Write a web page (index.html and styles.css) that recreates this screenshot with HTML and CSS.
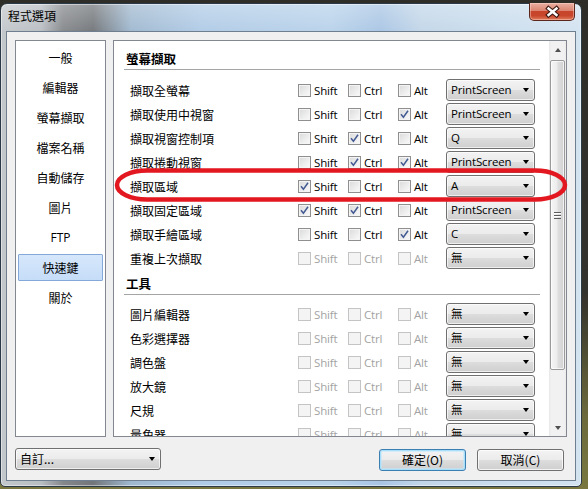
FILE: index.html
```html
<!DOCTYPE html>
<html lang="zh-Hant">
<head>
<meta charset="utf-8">
<title>程式選項</title>
<link rel="stylesheet" href="styles.css">
</head>
<body>
<div class="window">
  <div class="titlebar">
    <span class="title">程式選項</span>
    <span class="close">
      <svg width="46" height="18" viewBox="0 0 46 18">
        <path d="M19.5 6.5 L27.5 13 M27.5 6.5 L19.5 13" stroke="#3b1710" stroke-width="4.6" stroke-linecap="square" fill="none"/>
        <path d="M19.5 6.5 L27.5 13 M27.5 6.5 L19.5 13" stroke="#ffffff" stroke-width="2.4" stroke-linecap="square" fill="none"/>
      </svg>
    </span>
  </div>
  <div class="client">
    <div class="main">
      <ul class="nav">
        <li>一般</li>
        <li>編輯器</li>
        <li>螢幕擷取</li>
        <li>檔案名稱</li>
        <li>自動儲存</li>
        <li>圖片</li>
        <li class="latin">FTP</li>
        <li class="selected">快速鍵</li>
        <li>關於</li>
      </ul>
      <div class="panel">
        <div class="scroll-area">
          <div class="section-title first">螢幕擷取</div>
          <div class="rows">
            <div class="row">
              <span class="label">擷取全螢幕</span>
              <span class="cb"><span class="box"></span>Shift</span>
              <span class="cb"><span class="box"></span>Ctrl</span>
              <span class="cb"><span class="box"></span>Alt</span>
              <span class="combo"><span class="val">PrintScreen</span><span class="arrow"></span></span>
            </div>
            <div class="row">
              <span class="label">擷取使用中視窗</span>
              <span class="cb"><span class="box"></span>Shift</span>
              <span class="cb"><span class="box"></span>Ctrl</span>
              <span class="cb"><span class="box"><svg class="check" viewBox="0 0 11 11"><path d="M2 5.2 L4.4 8.2 L9 1.8"/></svg></span>Alt</span>
              <span class="combo"><span class="val">PrintScreen</span><span class="arrow"></span></span>
            </div>
            <div class="row">
              <span class="label">擷取視窗控制項</span>
              <span class="cb"><span class="box"></span>Shift</span>
              <span class="cb"><span class="box"><svg class="check" viewBox="0 0 11 11"><path d="M2 5.2 L4.4 8.2 L9 1.8"/></svg></span>Ctrl</span>
              <span class="cb"><span class="box"></span>Alt</span>
              <span class="combo"><span class="val">Q</span><span class="arrow"></span></span>
            </div>
            <div class="row">
              <span class="label">擷取捲動視窗</span>
              <span class="cb"><span class="box"></span>Shift</span>
              <span class="cb"><span class="box"><svg class="check" viewBox="0 0 11 11"><path d="M2 5.2 L4.4 8.2 L9 1.8"/></svg></span>Ctrl</span>
              <span class="cb"><span class="box"><svg class="check" viewBox="0 0 11 11"><path d="M2 5.2 L4.4 8.2 L9 1.8"/></svg></span>Alt</span>
              <span class="combo"><span class="val">PrintScreen</span><span class="arrow"></span></span>
            </div>
            <div class="row">
              <span class="label">擷取區域</span>
              <span class="cb"><span class="box"><svg class="check" viewBox="0 0 11 11"><path d="M2 5.2 L4.4 8.2 L9 1.8"/></svg></span>Shift</span>
              <span class="cb"><span class="box"></span>Ctrl</span>
              <span class="cb"><span class="box"></span>Alt</span>
              <span class="combo"><span class="val">A</span><span class="arrow"></span></span>
            </div>
            <div class="row">
              <span class="label">擷取固定區域</span>
              <span class="cb"><span class="box"><svg class="check" viewBox="0 0 11 11"><path d="M2 5.2 L4.4 8.2 L9 1.8"/></svg></span>Shift</span>
              <span class="cb"><span class="box"><svg class="check" viewBox="0 0 11 11"><path d="M2 5.2 L4.4 8.2 L9 1.8"/></svg></span>Ctrl</span>
              <span class="cb"><span class="box"></span>Alt</span>
              <span class="combo"><span class="val">PrintScreen</span><span class="arrow"></span></span>
            </div>
            <div class="row">
              <span class="label">擷取手繪區域</span>
              <span class="cb"><span class="box"></span>Shift</span>
              <span class="cb"><span class="box"></span>Ctrl</span>
              <span class="cb"><span class="box"><svg class="check" viewBox="0 0 11 11"><path d="M2 5.2 L4.4 8.2 L9 1.8"/></svg></span>Alt</span>
              <span class="combo"><span class="val">C</span><span class="arrow"></span></span>
            </div>
            <div class="row">
              <span class="label">重複上次擷取</span>
              <span class="cb disabled"><span class="box"></span>Shift</span>
              <span class="cb disabled"><span class="box"></span>Ctrl</span>
              <span class="cb disabled"><span class="box"></span>Alt</span>
              <span class="combo"><span class="val">無</span><span class="arrow"></span></span>
            </div>
          </div>
          <div class="section-title">工具</div>
          <div class="rows tools">
            <div class="row">
              <span class="label">圖片編輯器</span>
              <span class="cb disabled"><span class="box"></span>Shift</span>
              <span class="cb disabled"><span class="box"></span>Ctrl</span>
              <span class="cb disabled"><span class="box"></span>Alt</span>
              <span class="combo"><span class="val">無</span><span class="arrow"></span></span>
            </div>
            <div class="row">
              <span class="label">色彩選擇器</span>
              <span class="cb disabled"><span class="box"></span>Shift</span>
              <span class="cb disabled"><span class="box"></span>Ctrl</span>
              <span class="cb disabled"><span class="box"></span>Alt</span>
              <span class="combo"><span class="val">無</span><span class="arrow"></span></span>
            </div>
            <div class="row">
              <span class="label">調色盤</span>
              <span class="cb disabled"><span class="box"></span>Shift</span>
              <span class="cb disabled"><span class="box"></span>Ctrl</span>
              <span class="cb disabled"><span class="box"></span>Alt</span>
              <span class="combo"><span class="val">無</span><span class="arrow"></span></span>
            </div>
            <div class="row">
              <span class="label">放大鏡</span>
              <span class="cb disabled"><span class="box"></span>Shift</span>
              <span class="cb disabled"><span class="box"></span>Ctrl</span>
              <span class="cb disabled"><span class="box"></span>Alt</span>
              <span class="combo"><span class="val">無</span><span class="arrow"></span></span>
            </div>
            <div class="row">
              <span class="label">尺規</span>
              <span class="cb disabled"><span class="box"></span>Shift</span>
              <span class="cb disabled"><span class="box"></span>Ctrl</span>
              <span class="cb disabled"><span class="box"></span>Alt</span>
              <span class="combo"><span class="val">無</span><span class="arrow"></span></span>
            </div>
            <div class="row">
              <span class="label">量角器</span>
              <span class="cb disabled"><span class="box"></span>Shift</span>
              <span class="cb disabled"><span class="box"></span>Ctrl</span>
              <span class="cb disabled"><span class="box"></span>Alt</span>
              <span class="combo"><span class="val">無</span><span class="arrow"></span></span>
            </div>
          </div>
        </div>
        <div class="scrollbar">
          <span class="sb-btn"><span class="tri-up"></span></span>
          <span class="thumb"><span class="grip"></span></span>
          <span class="sb-space"></span>
          <span class="sb-btn"><span class="tri-down"></span></span>
        </div>
        <svg class="annotation" width="460" height="50" viewBox="0 0 460 50">
          <rect x="3" y="9.5" width="448" height="29" rx="30" ry="14.5" fill="none" stroke="#e3171f" stroke-width="4.5"/>
        </svg>
      </div>
    </div>
    <div class="footer">
      <span class="combo preset"><span class="val">自訂...</span><span class="arrow"></span></span>
      <div class="buttons">
        <span class="btn default">確定(O)</span>
        <span class="btn">取消(C)</span>
      </div>
    </div>
  </div>
</div>
</body>
</html>
```
FILE: styles.css
```css
* { box-sizing: border-box; }
html, body { margin: 0; padding: 0; }
body {
  width: 588px;
  height: 489px;
  overflow: hidden;
  background: linear-gradient(180deg, #2f2d28 0%, #34322c 60%, #6c6a3c 85%, #7a7840 100%);
  font-family: "Open Sans", "Noto Sans CJK TC", sans-serif;
  font-size: 12px;
  color: #000;
}
.window {
  margin-top: 3px;
  width: 582px;
  height: 484px;
  border: 1px solid #2c3946;
  border-radius: 7px 7px 5px 5px;
  background:
    linear-gradient(180deg, rgba(255,255,255,0.28) 0px, rgba(255,255,255,0.05) 26px, rgba(255,255,255,0) 27px),
    linear-gradient(90deg, #c3c8cc 0px, #b9bec3 40px, #85888b 62px, #72767a 92px, #9fb8cf 130px, #b0cbe6 200px, #b8d2ea 330px, #a9c5e4 380px, #c2d6e8 420px, #cadded 500px, #d3e3f0 582px);
  box-shadow: inset 0 0 0 1px rgba(255,255,255,0.45);
  display: flex;
  flex-direction: column;
}
.titlebar {
  height: 27px;
  display: flex;
  justify-content: space-between;
  align-items: flex-start;
  padding-left: 7px;
}
.title {
  font-family: "Noto Sans CJK TC", sans-serif;
  font-size: 12px;
  line-height: 24px;
  color: #000;
}
.close {
  display: block;
  margin-top: -1px;
  margin-right: 6px;
  width: 46px;
  height: 18px;
  border: 1px solid #5b261b;
  border-top: none;
  border-radius: 0 0 5px 5px;
  background: linear-gradient(180deg, #eab0a2 0%, #db8572 45%, #c6452b 50%, #c8472c 75%, #df7d5c 100%);
  box-shadow: inset 0 0 0 1px rgba(255,220,210,0.45);
}
.close svg { display: block; margin: -1px 0 0 -1px; }

.client {
  margin: 0 5px;
  height: 450px;
  background: #f0f0f0;
  border: 1px solid #6f7f90;
  display: flex;
  flex-direction: column;
}
.main {
  display: flex;
  gap: 7px;
  padding: 8px 8px 0 8px;
}
.nav {
  width: 91px;
  height: 397px;
  margin: 0;
  padding: 3px 2px 0;
  list-style: none;
  background: #fff;
  border: 1px solid #828790;
  font-family: "Noto Sans CJK TC", sans-serif;
}
.nav li {
  height: 27px;
  line-height: 25px;
  margin-bottom: 3px;
  border: 1px solid transparent;
  border-radius: 1px;
  text-align: center;
}
.nav li.latin { font-family: "Open Sans", sans-serif; font-size: 12px; }
.nav li.selected {
  background: linear-gradient(180deg, #d6e7fb 0%, #c6ddf8 100%);
  border-color: #84a9d8;
}
.panel {
  position: relative;
  width: 454px;
  height: 397px;
  background: #fff;
  border: 1px solid #828790;
  display: flex;
}
.scroll-area {
  flex: 1;
  overflow: hidden;
}
.section-title {
  margin: 0 9px 0 10px;
  padding: 4px 2px 0;
  line-height: 20px;
  font-family: "Noto Sans CJK TC", sans-serif;
  font-weight: bold;
  font-size: 12.5px;
  border-bottom: 1px solid #a5a5a5;
}
.section-title.first { margin-top: 5px; padding-top: 3px; }
.rows { padding-top: 8px; }
.rows.tools { padding-top: 7px; }
.row {
  display: grid;
  grid-template-columns: 168px 50px 50px 48px 89px;
  height: 24px;
  align-items: center;
  padding-left: 16px;
}
.label {
  font-family: "Noto Sans CJK TC", sans-serif;
  font-size: 12px;
  white-space: nowrap;
}
.cb {
  display: flex;
  align-items: center;
  gap: 3px;
  font-size: 11.5px;
  letter-spacing: -0.15px;
  color: #000;
}
.box {
  width: 13px;
  height: 13px;
  border: 1px solid #8f8f8f;
  background: linear-gradient(135deg, #d9dadb 0%, #eeeeee 60%, #fbfbfb 100%);
  box-shadow: inset 0 0 0 1px #f4f4f4;
  display: block;
  flex: none;
}
.check {
  display: block;
  width: 11px;
  height: 11px;
}
.check path {
  fill: none;
  stroke: #435a92;
  stroke-width: 1.5;
  stroke-linejoin: miter;
}
.cb.disabled { color: #a3a3a3; }
.cb.disabled .box {
  border-color: #c4c4c4;
  background: #f4f4f4;
  box-shadow: none;
}
.combo {
  height: 22px;
  border: 1px solid #707070;
  border-radius: 3px;
  background: linear-gradient(180deg, #f3f3f3 0%, #ebebeb 50%, #dddddd 50%, #cfcfcf 100%);
  box-shadow: inset 0 0 0 1px rgba(255,255,255,0.65);
  display: flex;
  align-items: center;
  justify-content: space-between;
  padding: 0 5px 0 4px;
  font-size: 11.5px;
  letter-spacing: -0.15px;
}
.combo .val { line-height: 20px; white-space: nowrap; }
.arrow {
  width: 0;
  height: 0;
  border-left: 3.5px solid transparent;
  border-right: 3.5px solid transparent;
  border-top: 4px solid #000;
}
.scrollbar {
  width: 17px;
  display: flex;
  flex-direction: column;
  align-items: center;
  background: linear-gradient(90deg, #e6e6e6 0, #f1f1f1 2px, #f1f1f1 15px, #ebebeb 17px);
}
.sb-btn {
  height: 17px;
  width: 17px;
  display: flex;
  align-items: center;
  justify-content: center;
}
.tri-up, .tri-down {
  width: 0;
  height: 0;
  border-left: 3.5px solid transparent;
  border-right: 3.5px solid transparent;
}
.tri-up { border-bottom: 4px solid #4f4f4f; }
.tri-down { border-top: 4px solid #4f4f4f; }
.thumb {
  margin-top: 2px;
  width: 15px;
  height: 310px;
  border: 1px solid #9a9a9a;
  border-radius: 2px;
  background: linear-gradient(90deg, #f6f6f6 0%, #ececec 45%, #dedede 55%, #d2d2d2 100%);
  box-shadow: inset 0 0 0 1px rgba(255,255,255,0.7);
  display: flex;
  align-items: center;
  justify-content: center;
}
.grip {
  width: 7px;
  height: 7px;
  background: repeating-linear-gradient(180deg, #5c5c5c 0 1px, #ffffff 1px 2px, transparent 2px 3px);
}
.sb-space { flex: 1; }
.annotation {
  position: absolute;
  left: 0;
  top: 120px;
  overflow: visible;
  pointer-events: none;
}
.footer {
  flex: 1;
  display: flex;
  align-items: center;
  justify-content: space-between;
  padding: 0 11px 0 8px;
}
.combo.preset {
  width: 146px;
  font-family: "Noto Sans CJK TC", sans-serif;
  font-size: 12px;
  letter-spacing: 0;
}
.buttons {
  display: flex;
  gap: 11px;
  margin-top: 2px;
}
.btn {
  width: 87px;
  height: 22px;
  border: 1px solid #707070;
  border-radius: 3px;
  background: linear-gradient(180deg, #f3f3f3 0%, #ebebeb 50%, #dddddd 50%, #cfcfcf 100%);
  box-shadow: inset 0 0 0 1px rgba(255,255,255,0.75);
  display: flex;
  align-items: center;
  justify-content: center;
  font-family: "Noto Sans CJK TC", sans-serif;
  font-size: 12px;
}
.btn.default {
  border-color: #3c7fb1;
  box-shadow: inset 0 0 0 1px #a9defa, inset 0 0 0 2px rgba(190,232,252,0.6);
}
```
